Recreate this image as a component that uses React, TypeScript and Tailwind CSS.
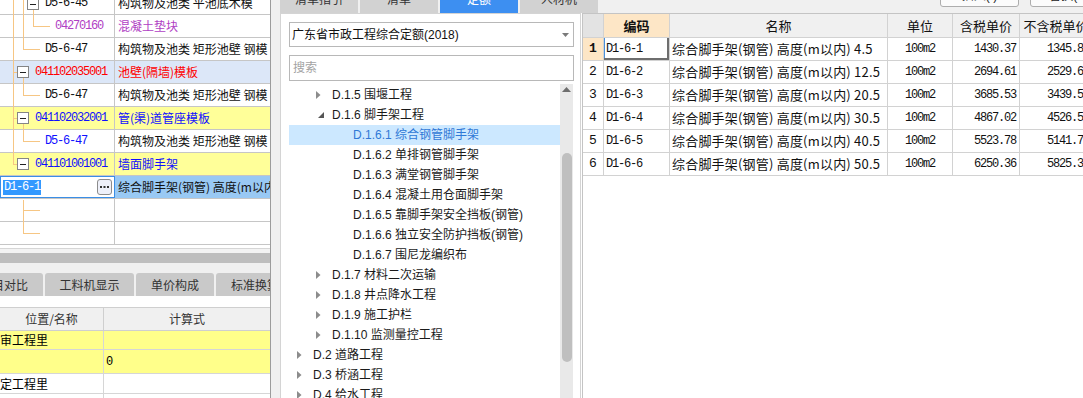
import React from "react";

const mono = "font-['Liberation_Mono',monospace] text-[12px] tracking-[-1.2px]";
const han = "font-['Noto_Sans_CJK_SC',sans-serif]";
const ui = "font-['Liberation_Sans','Noto_Sans_CJK_SC',sans-serif]";

type QRow = {
  code: string;
  name: string;
  pad: string;
  codeColor: string;
  nameColor: string;
  bg: string;
};

const qRows: QRow[] = [
  { code: "D5-6-45", name: "构筑物及池类 平池底木模", pad: "pl-[45px]", codeColor: "text-[#111]", nameColor: "text-[#111]", bg: "bg-white" },
  { code: "04270160", name: "混凝土垫块", pad: "pl-[55px]", codeColor: "text-[#b040c4]", nameColor: "text-[#b040c4]", bg: "bg-white" },
  { code: "D5-6-47", name: "构筑物及池类 矩形池壁 钢模", pad: "pl-[45px]", codeColor: "text-[#111]", nameColor: "text-[#111]", bg: "bg-white" },
  { code: "041102035001", name: "池壁(隔墙)模板", pad: "pl-[35px]", codeColor: "text-[#ff0000]", nameColor: "text-[#ff0000]", bg: "bg-[#dce7f8]" },
  { code: "D5-6-47", name: "构筑物及池类 矩形池壁 钢模", pad: "pl-[45px]", codeColor: "text-[#111]", nameColor: "text-[#111]", bg: "bg-white" },
  { code: "041102032001", name: "管(渠)道管座模板", pad: "pl-[35px]", codeColor: "text-[#1010ff]", nameColor: "text-[#1010ff]", bg: "bg-[#ffff99]" },
  { code: "D5-6-47", name: "构筑物及池类 矩形池壁 钢模", pad: "pl-[45px]", codeColor: "text-[#1010ff]", nameColor: "text-[#111]", bg: "bg-white" },
  { code: "041101001001", name: "墙面脚手架", pad: "pl-[35px]", codeColor: "text-[#1010ff]", nameColor: "text-[#1010ff]", bg: "bg-[#ffff99]" },
];

type TreeItem = { label: string; level: 1 | 2 | 3; state: "closed" | "open" | "leaf"; active?: boolean };

const treeItems: TreeItem[] = [
  { label: "D.1.5 围堰工程", level: 2, state: "closed" },
  { label: "D.1.6 脚手架工程", level: 2, state: "open" },
  { label: "D.1.6.1 综合钢管脚手架", level: 3, state: "leaf", active: true },
  { label: "D.1.6.2 单排钢管脚手架", level: 3, state: "leaf" },
  { label: "D.1.6.3 满堂钢管脚手架", level: 3, state: "leaf" },
  { label: "D.1.6.4 混凝土用仓面脚手架", level: 3, state: "leaf" },
  { label: "D.1.6.5 靠脚手架安全挡板(钢管)", level: 3, state: "leaf" },
  { label: "D.1.6.6 独立安全防护挡板(钢管)", level: 3, state: "leaf" },
  { label: "D.1.6.7 围尼龙编织布", level: 3, state: "leaf" },
  { label: "D.1.7 材料二次运输", level: 2, state: "closed" },
  { label: "D.1.8 井点降水工程", level: 2, state: "closed" },
  { label: "D.1.9 施工护栏", level: 2, state: "closed" },
  { label: "D.1.10 监测量控工程", level: 2, state: "closed" },
  { label: "D.2 道路工程", level: 1, state: "closed" },
  { label: "D.3 桥涵工程", level: 1, state: "closed" },
  { label: "D.4 给水工程", level: 1, state: "closed" },
];

const quotas = [
  ["D1-6-1", "4.5", "1430.37", "1345.82"],
  ["D1-6-2", "12.5", "2694.61", "2529.63"],
  ["D1-6-3", "20.5", "3685.53", "3439.54"],
  ["D1-6-4", "30.5", "4867.02", "4526.56"],
  ["D1-6-5", "40.5", "5523.78", "5141.72"],
  ["D1-6-6", "50.5", "6250.36", "5825.31"],
];

const cell = "shrink-0 h-full border-r border-[#d2d2d2] flex items-center";

function MinusBox({ x, y }: { x: number; y: number }) {
  return (
    <g>
      <rect x={x + 0.5} y={y + 0.5} width={11} height={11} fill="#fff" stroke="#858585" />
      <line x1={x + 3} y1={y + 6.5} x2={x + 9} y2={y + 6.5} stroke="#222" />
    </g>
  );
}

function TreeLines() {
  const c = "#f6c684";
  return (
    <svg className="absolute left-0 top-0 pointer-events-none" width="115" height="248">
      <g stroke={c} strokeWidth="1" fill="none">
        <line x1="13.5" y1="0" x2="13.5" y2="164.5" />
        <line x1="13" y1="72.5" x2="17" y2="72.5" />
        <line x1="13" y1="118.5" x2="17" y2="118.5" />
        <line x1="13" y1="164.5" x2="17" y2="164.5" />
        <line x1="23.5" y1="0" x2="23.5" y2="49.5" />
        <line x1="23" y1="49.5" x2="40" y2="49.5" />
        <line x1="33.5" y1="10" x2="33.5" y2="26.5" />
        <line x1="33" y1="26.5" x2="50" y2="26.5" />
        <line x1="23.5" y1="78" x2="23.5" y2="95.5" />
        <line x1="23" y1="95.5" x2="40" y2="95.5" />
        <line x1="23.5" y1="124" x2="23.5" y2="141.5" />
        <line x1="23" y1="141.5" x2="40" y2="141.5" />
        <line x1="23.5" y1="200" x2="23.5" y2="233.5" />
        <line x1="23" y1="210.5" x2="40" y2="210.5" />
        <line x1="23" y1="233.5" x2="40" y2="233.5" />
      </g>
      <MinusBox x={27} y={-2} />
      <MinusBox x={17} y={66} />
      <MinusBox x={17} y={112} />
      <MinusBox x={17} y={158} />
    </svg>
  );
}

function LeftPanel() {
  return (
    <div className="w-[271px] shrink-0 h-full flex flex-col border-r border-[#9c9c9c] bg-white overflow-hidden">
      <div className="relative h-[248px] shrink-0 overflow-hidden bg-white">
        <div className="-mt-[8px]">
          {qRows.map((r, i) => (
            <div key={i} className={`flex h-[23px] border-b border-[#c6c6c6] ${r.bg}`}>
              <div className={`w-[115px] shrink-0 border-r border-[#c6c6c6] flex items-center ${r.pad} ${r.codeColor} ${mono}`}>
                {r.code}
              </div>
              <div className={`flex-1 flex items-center pl-[3px] whitespace-nowrap overflow-hidden text-[12px] ${r.nameColor} ${han}`}>
                {r.name}
              </div>
            </div>
          ))}
          <div className="flex h-[23px] border-b border-[#c6c6c6]">
            <div className="w-[115px] shrink-0 border border-[#3a8ee6] bg-white flex items-center pl-[2px] pr-[2px]">
              <span className={`bg-[#3399ff] text-white leading-[15px] px-[1px] ${mono}`}>D1-6-1</span>
              <span className="ml-auto w-[15px] h-[16px] border border-[#8c8c8c] rounded-[3px] bg-[#eef0f9] flex items-center justify-center">
                <svg width="9" height="3">
                  <rect x="0" y="0" width="2" height="2" fill="#333" />
                  <rect x="3.5" y="0" width="2" height="2" fill="#333" />
                  <rect x="7" y="0" width="2" height="2" fill="#333" />
                </svg>
              </span>
            </div>
            <div className={`flex-1 flex items-center pl-[3px] whitespace-nowrap overflow-hidden bg-[#99c9f4] text-[12px] text-[#111] ${han}`}>
              综合脚手架(钢管) 高度(m以内) 4.5
            </div>
          </div>
          {[0, 1].map((i) => (
            <div key={i} className="flex h-[23px] border-b border-[#c6c6c6]">
              <div className="w-[115px] shrink-0 border-r border-[#c6c6c6]" />
              <div className="flex-1" />
            </div>
          ))}
        </div>
        <TreeLines />
      </div>
      <div className="h-[5px] shrink-0 bg-[#f3f3f3] border-t border-[#d6d6d6]" />
      <div className="h-[10px] shrink-0 bg-[#bebebe]" />
      <div className="h-[33px] shrink-0 bg-[#f0f0f0] pt-[10px] flex gap-[2px] overflow-hidden">
        {[
          ["项目对比", "w-[78px] -ml-[35px]"],
          ["工料机显示", "w-[89px]"],
          ["单价构成", "w-[78px]"],
          ["标准换算", "w-[78px]"],
        ].map(([t, w]) => (
          <div key={t} className={`${w} shrink-0 h-[23px] rounded-t-[3px] bg-[#c9c9c9] text-[#333] text-[12px] flex items-center justify-center whitespace-nowrap ${han}`}>
            {t}
          </div>
        ))}
      </div>
      <div className="h-[11px] shrink-0 bg-white" />
      <div className={`flex flex-col text-[12px] ${han}`}>
        <div className="flex h-[24px] bg-[#f0f0f0] border-y border-[#cfcfcf] text-[#333]">
          <div className="w-[104px] shrink-0 border-r border-[#cfcfcf] flex items-center justify-center">位置/名称</div>
          <div className="flex-1 flex items-center justify-center">计算式</div>
        </div>
        <div className="flex h-[19px] bg-[#ffff8a] border-b border-[#d6d6d6]">
          <div className="w-[104px] shrink-0 border-r border-[#d6d6d6] flex items-center">审工程里</div>
          <div className="flex-1" />
        </div>
        <div className="flex h-[24px] bg-[#ffff8a] border-b border-[#d6d6d6]">
          <div className="w-[104px] shrink-0 border-r border-[#d6d6d6]" />
          <div className={`flex-1 flex items-center pl-[2px] ${mono}`}>0</div>
        </div>
        <div className="flex h-[20px] bg-white border-b border-[#d6d6d6]">
          <div className="w-[104px] shrink-0 border-r border-[#d6d6d6] flex items-center">定工程里</div>
          <div className="flex-1" />
        </div>
        <div className="flex h-[23px] bg-white">
          <div className="w-[104px] shrink-0 border-r border-[#d6d6d6]" />
          <div className="flex-1" />
        </div>
      </div>
    </div>
  );
}

function Caret({ state }: { state: TreeItem["state"] }) {
  if (state === "closed")
    return (
      <svg width="5" height="8" className="shrink-0">
        <polygon points="0,0 4.5,4 0,8" fill="#8c8c8c" />
      </svg>
    );
  return (
    <svg width="8" height="8" className="shrink-0 ml-[1px]">
      <polygon points="7,1 7,7 1,7" fill="#555" />
    </svg>
  );
}

function TreePanel() {
  return (
    <div className={`w-[301px] shrink-0 h-full bg-white border-l border-t border-r border-[#d4d4d4] flex flex-col pl-[8px] pt-[8px] overflow-hidden text-[12px] ${ui}`}>
      <div className="w-[285px] h-[25px] shrink-0 border border-[#b8b8b8] flex items-center justify-between pl-[2px] pr-[4px] text-[#111]">
        <span>广东省市政工程综合定额(2018)</span>
        <svg width="7" height="4">
          <polygon points="0,0 7,0 3.5,4" fill="#7a7a7a" />
        </svg>
      </div>
      <div className="mt-[8px] w-[285px] h-[26px] shrink-0 border border-[#b8b8b8] flex items-center pl-[3px] text-[#a3a3a3]">
        搜索
      </div>
      <div className="mt-[3px] flex flex-1 min-h-0">
        <div className="w-[271px] shrink-0 pt-[1px] overflow-hidden">
          {treeItems.map((it) => (
            <div
              key={it.label}
              className={`flex items-center h-[20px] whitespace-nowrap ${it.active ? "bg-[#cce8ff] text-[#2f78d6]" : "text-[#1a1a1a]"}`}
            >
              {it.level === 1 && <div className="w-[8px] shrink-0" />}
              {it.level === 2 && <div className="w-[27px] shrink-0" />}
              {it.level === 3 && <div className="w-[64px] shrink-0" />}
              {it.state !== "leaf" && (
                <div className="w-[16px] shrink-0 flex items-center">
                  <Caret state={it.state} />
                </div>
              )}
              <span>{it.label}</span>
            </div>
          ))}
        </div>
        <div className="w-[13px] shrink-0 bg-[#e9e9e9] flex flex-col items-center">
          <svg width="9" height="5" className="mt-[3px]">
            <polygon points="0,5 4.5,0 9,5" fill="#6e6e6e" />
          </svg>
          <div className="mt-[61px] w-[10px] h-[209px] rounded-full bg-[#bfbfbf]" />
        </div>
      </div>
    </div>
  );
}

function QuotaTable() {
  const w = ["w-[21px]", "w-[66px]", "w-[218px]", "w-[65px]", "w-[67px]", "w-[73px]"];
  return (
    <div className="flex-1 min-w-0 h-full bg-white pl-[1px] overflow-hidden">
      <div className={`w-[511px] h-full border-t border-l border-[#c4c4c4] flex flex-col text-[13px] text-[#111] ${han}`}>
        <div className="flex h-[24px] shrink-0 border-b border-[#d2d2d2] bg-[#f0f0f0]">
          <div className={`${cell} ${w[0]} bg-[#e3e3e3]`} />
          <div className={`${cell} ${w[1]} justify-center bg-[#fde6c6] font-bold`}>编码</div>
          <div className={`${cell} ${w[2]} justify-center`}>名称</div>
          <div className={`${cell} ${w[3]} justify-center`}>单位</div>
          <div className={`${cell} ${w[4]} justify-center`}>含税单价</div>
          <div className={`${cell} ${w[5]} justify-center whitespace-nowrap`}>不含税单价</div>
        </div>
        {quotas.map(([code, h, p1, p2], i) => (
          <div key={code} className="flex h-[23px] shrink-0 border-b border-[#d2d2d2]">
            <div
              className={`${cell} ${w[0]} justify-center font-['Liberation_Mono',monospace] text-[13px] ${i === 0 ? "bg-[#fde6c6] font-bold" : ""}`}
            >
              {i + 1}
            </div>
            <div
              className={`${cell} ${w[1]} pl-[2px] ${mono} ${i === 0 ? "shadow-[inset_-2px_-2px_0_#6e6e6e,inset_1px_0_0_#4a90d9]" : ""}`}
            >
              {code}
            </div>
            <div className={`${cell} ${w[2]} pl-[2px] whitespace-nowrap overflow-hidden tracking-[0.2px]`}>
              综合脚手架(钢管) 高度(m以内) {h}
            </div>
            <div className={`${cell} ${w[3]} justify-center ${mono}`}>100m2</div>
            <div className={`${cell} ${w[4]} justify-end pr-[3px] ${mono}`}>{p1}</div>
            <div className={`${cell} ${w[5]} justify-end pr-[3px] ${mono}`}>{p2}</div>
          </div>
        ))}
        <div className="flex-1" />
      </div>
    </div>
  );
}

function Dialog() {
  const tabs = ["清单指引", "清单", "定额", "人材机"];
  return (
    <div className="flex-1 min-w-0 h-full flex flex-col pl-[9px] overflow-hidden">
      <div className={`h-[13px] shrink-0 flex items-end gap-[2px] overflow-hidden text-[12px] ${ui}`}>
        {tabs.map((t) => (
          <div
            key={t}
            className={`w-[78px] h-[26px] shrink-0 flex items-center justify-center rounded-t-[3px] ${t === "定额" ? "bg-[#3d8ff1] text-white" : "bg-[#d2d2d2] text-[#333]"}`}
          >
            {t}
          </div>
        ))}
        <div className="ml-[340px] mb-[6px] w-[79px] h-[22px] shrink-0 border border-[#adadad] rounded-[3px] bg-[#fbfbfb] flex items-center justify-center text-[#222]">
          插入(I)
        </div>
        <div className="ml-[9px] mb-[6px] w-[79px] h-[22px] shrink-0 border border-[#adadad] rounded-[3px] bg-[#fbfbfb] flex items-center justify-center text-[#222]">
          替换(R)
        </div>
      </div>
      <div className="flex-1 flex min-h-0">
        <TreePanel />
        <QuotaTable />
      </div>
    </div>
  );
}

export default function App() {
  return (
    <div className="w-[1083px] h-[398px] overflow-hidden flex bg-[#f0f0f0] text-black">
      <LeftPanel />
      <Dialog />
    </div>
  );
}
